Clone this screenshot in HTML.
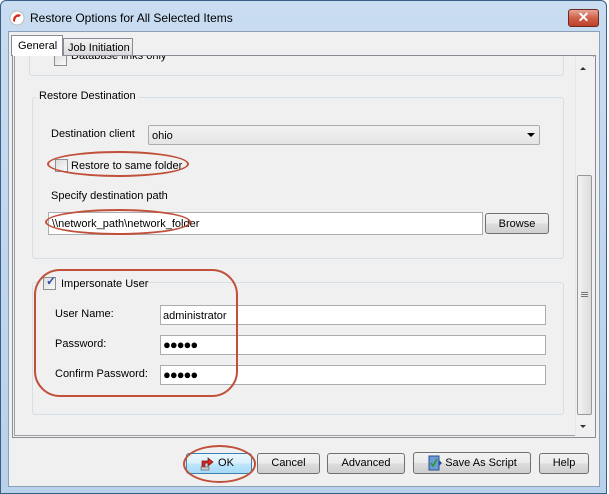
<!DOCTYPE html>
<html><head><style>
*{box-sizing:border-box;margin:0;padding:0}
body{width:609px;height:494px;overflow:hidden;font-family:"Liberation Sans",sans-serif;font-size:11px;color:#000;background:#fff}
.a{position:absolute}
#win{left:0;top:0;width:607px;height:494px;background:linear-gradient(#c9dcf1,#b9d1ea);border:1px solid #3a5f86;border-radius:6px 6px 0 0}
#client{left:8px;top:31px;width:592px;height:456px;background:#f0f0f0;border:1px solid #8aa0b8}
.grp{border:1px solid #d5dfe5;border-radius:3px}
.inp{background:#fff;border:1px solid #abadb3}
.btn{border:1px solid #707070;border-radius:3px;background:linear-gradient(#f2f2f2 0,#ebebeb 50%,#dddddd 51%,#cfcfcf 100%);text-align:center;line-height:19px;font-size:11px}
.cb{width:13px;height:13px;border:1px solid #8e8f8f;background:linear-gradient(135deg,#dcdcdc,#fafafa)}
.ell{border:2px solid #c0503a;border-radius:50%}
</style></head><body>
<div id="win" class="a"></div>
<svg class="a" style="left:9px;top:10px" width="16" height="16"><circle cx="8" cy="8" r="7" fill="#fff" stroke="#bbb"/><path d="M4 11 C4 5 9 3 12 5 L10 7 C8 6 6 8 6 12 Z" fill="#d4281c"/></svg>
<div class="a" style="left:30px;top:11px;font-size:12px;color:#000">Restore Options for All Selected Items</div>
<div class="a" style="left:568px;top:9px;width:31px;height:18px;border:1px solid #6b2a22;border-radius:3px;background:linear-gradient(#e7a597,#d0604a 50%,#c0402a)"></div>
<div class="a" style="left:568px;top:7px;width:31px;height:20px;color:#fff;font-weight:bold;font-size:14px;text-align:center;line-height:20px">✕</div>
<div id="client" class="a"></div>
<!-- tabs -->
<div class="a" style="left:63px;top:38px;width:70px;height:18px;border:1px solid #898c95;background:linear-gradient(#f2f2f2,#dcdcdc);padding:3px 0 0 4px">Job Initiation</div>
<div class="a" style="left:11px;top:35px;width:52px;height:21px;border:1px solid #898c95;border-bottom:none;background:#fff;padding:4px 0 0 6px">General</div>
<div class="a" style="left:12px;top:55px;width:584px;height:383px;border:1px solid #898c95;border-top:none;"></div>
<div class="a" style="left:62px;top:55px;width:534px;height:1px;background:#898c95"></div>
<div class="a" style="left:14px;top:56px;width:580px;height:380px;border:1px solid #a0a0a0;border-top:none"></div>
<!-- top group remnant clipped -->
<div class="a" style="left:15px;top:56px;width:560px;height:30px;overflow:hidden">
 <div class="a grp" style="left:14px;top:-20px;width:535px;height:40px"></div>
 <div class="a cb" style="left:39px;top:-3px"></div>
 <div class="a" style="left:56px;top:-6px">Database links only</div>
</div>
<!-- Restore Destination -->
<div class="a grp" style="left:32px;top:97px;width:532px;height:162px"></div>
<div class="a" style="left:36px;top:90px;padding:0 3px;background:#f0f0f0">Restore Destination</div>
<div class="a" style="left:51px;top:128px">Destination client</div>
<div class="a" style="left:148px;top:125px;width:392px;height:20px;border:1px solid #acacac;border-radius:2px;background:linear-gradient(#f2f2f2,#e5e5e5);padding:4px 0 0 3px">ohio</div>
<div class="a" style="left:527px;top:133px;width:0;height:0;border-left:4px solid transparent;border-right:4px solid transparent;border-top:4px solid #000"></div>
<div class="a cb" style="left:55px;top:159px"></div>
<div class="a" style="left:71px;top:160px">Restore to same folder</div>
<div class="a ell" style="left:47px;top:151px;width:142px;height:26px"></div>
<div class="a" style="left:51px;top:190px">Specify destination path</div>
<div class="a inp" style="left:48px;top:212px;width:435px;height:23px;padding:5px 0 0 3px">\\network_path\network_folder</div>
<div class="a btn" style="left:485px;top:213px;width:64px;height:21px;line-height:20px">Browse</div>
<div class="a ell" style="left:45px;top:209px;width:146px;height:26px"></div>
<!-- Impersonate -->
<div class="a grp" style="left:32px;top:282px;width:532px;height:133px"></div>
<div class="a" style="left:41px;top:275px;width:88px;height:14px;background:#f0f0f0"></div>
<div class="a cb" style="left:43px;top:277px"></div>
<div class="a" style="left:46px;top:274px;color:#2a4cb0;font-size:12px;font-weight:bold">✓</div>
<div class="a" style="left:61px;top:278px">Impersonate User</div>
<div class="a" style="left:55px;top:308px">User Name:</div>
<div class="a" style="left:55px;top:338px">Password:</div>
<div class="a" style="left:55px;top:368px">Confirm Password:</div>
<div class="a inp" style="left:160px;top:305px;width:386px;height:20px;padding:4px 0 0 2px">administrator</div>
<div class="a inp" style="left:160px;top:335px;width:386px;height:20px;padding:1px 0 0 2px;font-size:13px;letter-spacing:-1px">●●●●●</div>
<div class="a inp" style="left:160px;top:365px;width:386px;height:20px;padding:1px 0 0 2px;font-size:13px;letter-spacing:-1px">●●●●●</div>
<div class="a" style="border:2px solid #c0503a;border-radius:26px;left:34px;top:269px;width:204px;height:128px"></div>
<!-- scrollbar -->
<div class="a" style="left:575px;top:57px;width:19px;height:379px;background:#f0f0f0;border-left:1px solid #e6e6e6"></div>
<div class="a" style="left:580px;top:67px;width:0;height:0;border-left:3px solid transparent;border-right:3px solid transparent;border-bottom:3px solid #333"></div>
<div class="a" style="left:580px;top:425px;width:0;height:0;border-left:3px solid transparent;border-right:3px solid transparent;border-top:3px solid #333"></div>
<div class="a" style="left:577px;top:175px;width:15px;height:240px;border:1px solid #979797;border-radius:2px;background:linear-gradient(90deg,#f3f3f3,#dcdcdc)"></div>
<div class="a" style="left:581px;top:292px;width:7px;height:5px;border-top:1px solid #777;border-bottom:1px solid #777"></div>
<div class="a" style="left:581px;top:294px;width:7px;height:1px;background:#777"></div>
<!-- buttons -->
<div class="a btn" style="left:186px;top:453px;width:66px;height:21px;border-color:#3c7fb1;background:linear-gradient(#eaf6fd,#d9f0fc 50%,#bee6fd 51%,#a7d9f5);padding-left:14px">OK</div>
<svg class="a" style="left:199px;top:455px" width="16" height="16"><path d="M3 14 L3 6 L9 6 L9 3 L14 7 L9 11 L9 8 L6 8 L6 14 Z" fill="#d42a1c" stroke="#7a1010" stroke-width="0.7"/><rect x="2" y="12" width="8" height="3" fill="#ccc" stroke="#555" stroke-width="0.6"/></svg>
<div class="a ell" style="left:183px;top:445px;width:73px;height:38px"></div>
<div class="a btn" style="left:257px;top:453px;width:63px;height:21px">Cancel</div>
<div class="a btn" style="left:327px;top:453px;width:78px;height:21px">Advanced</div>
<div class="a btn" style="left:413px;top:452px;width:118px;height:22px;padding-left:18px;line-height:21px">Save As Script</div>
<svg class="a" style="left:428px;top:455px" width="14" height="16"><rect x="1" y="1" width="10" height="14" fill="#6a9ad8" stroke="#2a4f8c"/><path d="M11 5 L14 8 L11 11 Z" fill="#2a4f8c"/><path d="M3 8 L5 11 L9 4" stroke="#2a9a2a" stroke-width="1.6" fill="none"/></svg>
<div class="a btn" style="left:539px;top:453px;width:50px;height:21px">Help</div>
</body></html>
